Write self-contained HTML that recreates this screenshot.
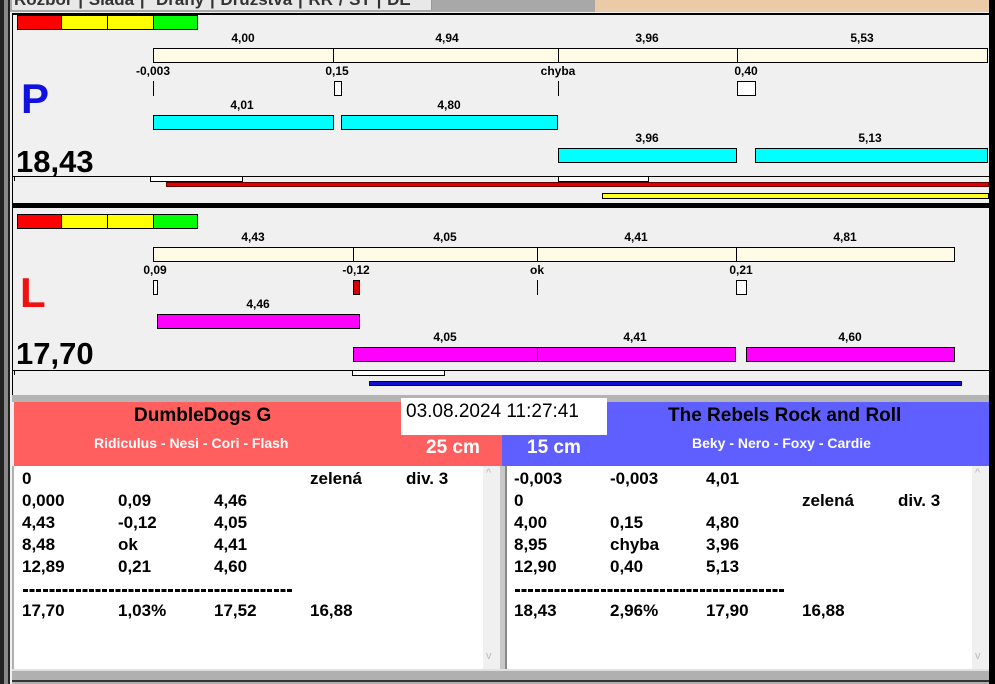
<!DOCTYPE html>
<html><head><meta charset="utf-8"><style>
*{margin:0;padding:0;box-sizing:border-box}
body{width:995px;height:684px;position:relative;overflow:hidden;background:#f0f0f0;font-family:"Liberation Sans",Arial,sans-serif}
div{position:absolute}
.t{font-size:12px;font-weight:bold;color:#000;transform:translateX(-50%);white-space:nowrap;line-height:14px}
.cr{background:#fffbe6;border:1px solid #000}
.cy{background:#00ffff;border:1px solid #000}
.mg{background:#ff00ff;border:1px solid #000}
.wb{background:#fff;border:1px solid #000}
.l{font-size:17px;font-weight:bold;line-height:20px;white-space:nowrap}
.d{height:3px;background:repeating-linear-gradient(90deg,#000 0 5px,transparent 5px 6.6px)}
</style></head><body>
<div style="left:0;top:0;width:10px;height:684px;background:#222"></div>
<div style="left:4px;top:0;width:4px;height:684px;background:#888"></div>
<div style="left:10px;top:0;width:585px;height:12px;background:#a8a8a8"></div>
<div style="left:12px;top:0;width:420px;height:10px;background:#e8e8e8;border-right:1px solid #999"></div>
<div style="left:14px;top:-10px;font-size:17px;font-weight:bold;color:#333;white-space:nowrap;word-spacing:1px">Rozbor | Sláda | &nbsp;Dráhy | Družstva | RR / ST | DE</div>
<div style="left:595px;top:0;width:400px;height:12px;background:#ebcaa8"></div>
<div style="left:989px;top:0;width:6px;height:684px;background:#000"></div>
<div style="left:12px;top:13px;width:977px;height:2px;background:#000"></div>
<div style="left:12px;top:13px;width:1px;height:192px;background:#000"></div>
<div style="left:17px;top:15px;width:45px;height:15px;background:#f00;border:1px solid #000"></div>
<div style="left:61px;top:15px;width:47px;height:15px;background:#ff0;border:1px solid #000"></div>
<div style="left:107px;top:15px;width:47px;height:15px;background:#ff0;border:1px solid #000"></div>
<div style="left:153px;top:15px;width:45px;height:15px;background:#0f0;border:1px solid #000"></div>
<div class="t" style="left:243px;top:31px">4,00</div>
<div class="t" style="left:447px;top:31px">4,94</div>
<div class="t" style="left:647px;top:31px">3,96</div>
<div class="t" style="left:862px;top:31px">5,53</div>
<div class="cr" style="left:153px;top:48px;width:181px;height:15px"></div>
<div class="cr" style="left:333px;top:48px;width:226px;height:15px"></div>
<div class="cr" style="left:558px;top:48px;width:180px;height:15px"></div>
<div class="cr" style="left:737px;top:48px;width:251px;height:15px"></div>
<div class="t" style="left:153px;top:64px">-0,003</div>
<div class="t" style="left:337px;top:64px">0,15</div>
<div class="t" style="left:558px;top:64px">chyba</div>
<div class="t" style="left:746px;top:64px">0,40</div>
<div style="left:153px;top:81px;width:1px;height:15px;background:#000"></div>
<div class="wb" style="left:334px;top:81px;width:8px;height:15px"></div>
<div style="left:558px;top:81px;width:1px;height:15px;background:#000"></div>
<div class="wb" style="left:737px;top:81px;width:19px;height:15px"></div>
<div style="left:21px;top:76px;font-size:42px;font-weight:bold;color:#1010e0;line-height:46px">P</div>
<div class="t" style="left:242px;top:98px">4,01</div>
<div class="t" style="left:449px;top:98px">4,80</div>
<div class="cy" style="left:153px;top:115px;width:181px;height:15px"></div>
<div class="cy" style="left:341px;top:115px;width:217px;height:15px"></div>
<div class="t" style="left:647px;top:131px">3,96</div>
<div class="t" style="left:870px;top:131px">5,13</div>
<div class="cy" style="left:558px;top:148px;width:179px;height:15px"></div>
<div class="cy" style="left:755px;top:148px;width:233px;height:15px"></div>
<div style="left:16px;top:144px;font-size:31px;font-weight:bold;line-height:36px">18,43</div>
<div style="left:12px;top:176px;width:977px;height:1px;background:#000"></div>
<div style="left:14px;top:176px;width:1px;height:5px;background:#000"></div>
<div class="wb" style="left:150px;top:176px;width:93px;height:6px"></div>
<div class="wb" style="left:558px;top:176px;width:91px;height:6px"></div>
<div style="left:166px;top:182px;width:823px;height:5px;background:#e00000;border:1px solid #600"></div>
<div style="left:602px;top:193px;width:387px;height:6px;background:#ffff20;border:1px solid #000"></div>
<div style="left:12px;top:203px;width:977px;height:5px;background:#000"></div>
<div style="left:12px;top:208px;width:1px;height:190px;background:#000"></div>
<div style="left:17px;top:214px;width:45px;height:15px;background:#f00;border:1px solid #000"></div>
<div style="left:61px;top:214px;width:47px;height:15px;background:#ff0;border:1px solid #000"></div>
<div style="left:107px;top:214px;width:47px;height:15px;background:#ff0;border:1px solid #000"></div>
<div style="left:153px;top:214px;width:45px;height:15px;background:#0f0;border:1px solid #000"></div>
<div class="t" style="left:253px;top:230px">4,43</div>
<div class="t" style="left:445px;top:230px">4,05</div>
<div class="t" style="left:636px;top:230px">4,41</div>
<div class="t" style="left:845px;top:230px">4,81</div>
<div class="cr" style="left:153px;top:247px;width:201px;height:15px"></div>
<div class="cr" style="left:353px;top:247px;width:185px;height:15px"></div>
<div class="cr" style="left:537px;top:247px;width:200px;height:15px"></div>
<div class="cr" style="left:736px;top:247px;width:219px;height:15px"></div>
<div class="t" style="left:155px;top:263px">0,09</div>
<div class="t" style="left:356px;top:263px">-0,12</div>
<div class="t" style="left:537px;top:263px">ok</div>
<div class="t" style="left:741px;top:263px">0,21</div>
<div class="wb" style="left:153px;top:280px;width:5px;height:15px"></div>
<div style="left:353px;top:280px;width:7px;height:15px;background:#e00000;border:1px solid #000"></div>
<div style="left:537px;top:280px;width:1px;height:15px;background:#000"></div>
<div class="wb" style="left:736px;top:280px;width:11px;height:15px"></div>
<div style="left:20px;top:270px;font-size:42px;font-weight:bold;color:#f01010;line-height:46px">L</div>
<div class="t" style="left:258px;top:297px">4,46</div>
<div class="mg" style="left:157px;top:314px;width:203px;height:15px"></div>
<div class="t" style="left:445px;top:330px">4,05</div>
<div class="t" style="left:635px;top:330px">4,41</div>
<div class="t" style="left:850px;top:330px">4,60</div>
<div class="mg" style="left:353px;top:347px;width:185px;height:15px"></div>
<div class="mg" style="left:537px;top:347px;width:199px;height:15px"></div>
<div class="mg" style="left:746px;top:347px;width:209px;height:15px"></div>
<div style="left:16px;top:336px;font-size:31px;font-weight:bold;line-height:36px">17,70</div>
<div style="left:12px;top:370px;width:977px;height:1px;background:#000"></div>
<div style="left:14px;top:370px;width:1px;height:5px;background:#000"></div>
<div class="wb" style="left:352px;top:370px;width:93px;height:6px"></div>
<div style="left:369px;top:381px;width:593px;height:5px;background:#1010d0;border:1px solid #000050"></div>
<div style="left:12px;top:395px;width:977px;height:7px;background:#b4b4b4"></div>
<div style="left:14px;top:402px;width:488px;height:64px;background:#ff5f5f"></div>
<div style="left:502px;top:402px;width:487px;height:64px;background:#5f5fff"></div>
<div style="left:134px;top:405px;font-size:19px;font-weight:bold;line-height:22px">DumbleDogs G</div>
<div style="left:94px;top:435px;font-size:14px;font-weight:bold;color:#fff;line-height:17px">Ridiculus - Nesi - Cori - Flash</div>
<div style="left:426px;top:437px;font-size:19px;font-weight:bold;color:#fff;line-height:22px">25 cm</div>
<div style="left:527px;top:437px;font-size:19px;font-weight:bold;color:#fff;line-height:22px">15 cm</div>
<div style="left:668px;top:405px;font-size:19px;font-weight:bold;line-height:22px">The Rebels Rock and Roll</div>
<div style="left:692px;top:435px;font-size:14px;font-weight:bold;color:#fff;line-height:17px">Beky - Nero - Foxy - Cardie</div>
<div style="left:401px;top:398px;width:206px;height:37px;background:#fff"></div>
<div style="left:406px;top:400px;font-size:19px;line-height:24px">03.08.2024 11:27:41</div>
<div style="left:12px;top:466px;width:977px;height:218px;background:#b0b0b0"></div>
<div style="left:14px;top:466px;width:486px;height:203px;background:#fff"></div>
<div style="left:483px;top:466px;width:17px;height:203px;background:#f0f0f0"></div>
<div style="left:486px;top:467px;font-size:11px;color:#bbb">^</div>
<div style="left:486px;top:650px;font-size:11px;color:#bbb">v</div>
<div style="left:500px;top:466px;width:7px;height:203px;background:#c8c8c8;border-right:2px solid #888"></div>
<div style="left:507px;top:466px;width:482px;height:203px;background:#fff"></div>
<div style="left:972px;top:466px;width:17px;height:203px;background:#f0f0f0"></div>
<div style="left:975px;top:467px;font-size:11px;color:#bbb">^</div>
<div style="left:975px;top:650px;font-size:11px;color:#bbb">v</div>
<div style="left:12px;top:669px;width:977px;height:2px;background:#e0e0e0"></div>
<div style="left:12px;top:680px;width:977px;height:2px;background:#333"></div>

<div class="l" style="left:22px;top:469px">0</div><div class="l" style="left:310px;top:469px">zelená</div><div class="l" style="left:406px;top:469px">div. 3</div>
<div class="l" style="left:22px;top:491px">0,000</div><div class="l" style="left:118px;top:491px">0,09</div><div class="l" style="left:214px;top:491px">4,46</div>
<div class="l" style="left:22px;top:513px">4,43</div><div class="l" style="left:118px;top:513px">-0,12</div><div class="l" style="left:214px;top:513px">4,05</div>
<div class="l" style="left:22px;top:535px">8,48</div><div class="l" style="left:118px;top:535px">ok</div><div class="l" style="left:214px;top:535px">4,41</div>
<div class="l" style="left:22px;top:557px">12,89</div><div class="l" style="left:118px;top:557px">0,21</div><div class="l" style="left:214px;top:557px">4,60</div>
<div class="d" style="left:23px;top:589px;width:270px"></div>
<div class="l" style="left:22px;top:601px">17,70</div><div class="l" style="left:118px;top:601px">1,03%</div><div class="l" style="left:214px;top:601px">17,52</div><div class="l" style="left:310px;top:601px">16,88</div>

<div class="l" style="left:514px;top:469px">-0,003</div><div class="l" style="left:610px;top:469px">-0,003</div><div class="l" style="left:706px;top:469px">4,01</div>
<div class="l" style="left:514px;top:491px">0</div><div class="l" style="left:802px;top:491px">zelená</div><div class="l" style="left:898px;top:491px">div. 3</div>
<div class="l" style="left:514px;top:513px">4,00</div><div class="l" style="left:610px;top:513px">0,15</div><div class="l" style="left:706px;top:513px">4,80</div>
<div class="l" style="left:514px;top:535px">8,95</div><div class="l" style="left:610px;top:535px">chyba</div><div class="l" style="left:706px;top:535px">3,96</div>
<div class="l" style="left:514px;top:557px">12,90</div><div class="l" style="left:610px;top:557px">0,40</div><div class="l" style="left:706px;top:557px">5,13</div>
<div class="d" style="left:515px;top:589px;width:270px"></div>
<div class="l" style="left:514px;top:601px">18,43</div><div class="l" style="left:610px;top:601px">2,96%</div><div class="l" style="left:706px;top:601px">17,90</div><div class="l" style="left:802px;top:601px">16,88</div>
</body></html>
